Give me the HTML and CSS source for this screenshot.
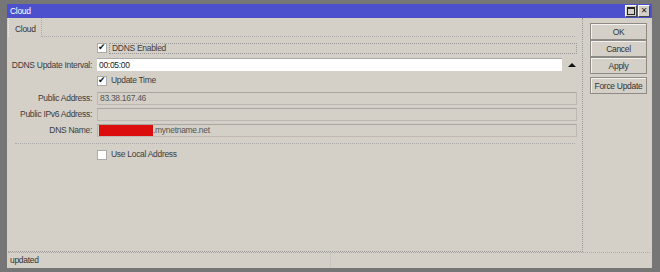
FILE: index.html
```html
<!DOCTYPE html>
<html lang="en">
<head>
  <meta charset="UTF-8" />
  <title>Cloud</title>
  <link rel="stylesheet" href="styles.css">
</head>
<body>
  <div class="window">
    <div class="titlebar">
      <span class="title">Cloud</span>
      <span class="tb-btn"><span class="max-icon"></span></span>
      <span class="tb-btn close">&#x2715;</span>
    </div>

    <div class="main">
      <div class="panel">
        <div class="tabs">
          <div class="tab">Cloud</div>
          <div class="tab-rest"></div>
        </div>

        <div class="form">
          <!-- checkboxes and fields -->
          <div class="row r1">
            <span class="label"></span>
            <span class="check on"></span>
            <span class="check-label focus">DDNS Enabled</span>
          </div>
          <div class="row r2">
            <span class="label">DDNS Update Interval:</span>
            <span class="input">00:05:00</span>
            <span class="arrow"></span>
          </div>
          <div class="row r3">
            <span class="label"></span>
            <span class="check on"></span>
            <span class="check-label">Update Time</span>
          </div>
          <div class="row r4">
            <span class="label">Public Address:</span>
            <span class="field">83.38.167.46</span>
          </div>
          <div class="row r5">
            <span class="label">Public IPv6 Address:</span>
            <span class="field"></span>
          </div>
          <div class="row r6">
            <span class="label">DNS Name:</span>
            <span class="field"><span class="redact"></span>.mynetname.net</span>
          </div>
          <div class="separator"></div>
          <div class="row r7">
            <span class="label"></span>
            <span class="check"></span>
            <span class="check-label">Use Local Address</span>
          </div>
        </div>
      </div>

      <div class="buttons">
        <button class="btn">OK</button>
        <button class="btn">Cancel</button>
        <button class="btn">Apply</button>
        <button class="btn spaced">Force Update</button>
      </div>
    </div>

    <div class="statusbar">
      <div class="status-cell first">updated</div>
      <div class="status-cell"></div>
    </div>
  </div>
</body>
</html>
```

FILE: styles.css
```css
body {
  margin: 0;
  background: #767676;
  font-family: "Liberation Sans", Arial, sans-serif;
  font-size: 8.5px;
  letter-spacing: -0.3px;
  color: #3c3c3c;
}
.window {
  margin: 4px 0 0 7px;
  width: 645px;
  height: 264px;
  background: #d4d0c8;
  display: flex;
  flex-direction: column;
}
.titlebar {
  height: 14px;
  background: #4d50cc;
  display: flex;
  align-items: center;
  padding: 0 2px 0 3px;
}
.title {
  color: #fff;
  flex: 1;
}
.tb-btn {
  width: 10px;
  height: 10px;
  background: #d4d0c8;
  border: 1px solid #fff;
  border-right-color: #444;
  border-bottom-color: #444;
  margin-left: 1px;
  display: flex;
  align-items: center;
  justify-content: center;
  color: #222;
  font-family: "DejaVu Sans", sans-serif;
  font-size: 8px;
  letter-spacing: 0;
  line-height: 1;
}
.max-icon {
  width: 6px;
  height: 5px;
  border: 1px solid #222;
  border-top-width: 2px;
}
.main {
  flex: 1;
  display: flex;
}
.panel {
  margin-left: 1px;
  width: 574px;
  border-right: 1px dotted #999;
  border-bottom: 1px dotted #999;
  display: flex;
  flex-direction: column;
}
.tabs {
  display: flex;
  height: 19px;
}
.tab {
  width: 26px;
  padding: 6px 0 0 6px;
  border-right: 1px dotted #aaa;
  border-left: 1px dotted #eee;
  color: #333;
}
.tab-rest {
  flex: 1;
  border-bottom: 1px dotted #aaa;
  margin-right: 7px;
}
.form {
  padding-top: 6px;
}
.row {
  display: flex;
  align-items: center;
}
.label {
  width: 84px;
  margin-right: 5px;
  text-align: right;
  white-space: nowrap;
  flex: none;
}
.r1 { height: 10px; }
.r2 { height: 13px; margin-top: 5px; }
.r3 { height: 11px; margin-top: 4px; }
.r4 { height: 12px; margin-top: 6px; }
.r5 { height: 12px; margin-top: 4px; }
.r6 { height: 12px; margin-top: 4px; }
.r7 { height: 11px; margin-top: 5px; }
.check {
  width: 8px;
  height: 8px;
  background: #fff;
  border: 1px solid #aaa;
  flex: none;
  position: relative;
}
.check.on::after {
  content: "\2714";
  position: absolute;
  left: 0;
  top: -2px;
  font-family: "DejaVu Sans", sans-serif;
  font-size: 9px;
  color: #111;
}
.check-label {
  margin-left: 2px;
  padding: 0 2px;
  height: 9px;
  line-height: 9px;
}
.check-label.focus {
  flex: none;
  width: 462px;
  border: 1px dotted #999;
}
.input {
  width: 463px;
  height: 12px;
  line-height: 12px;
  background: #fff;
  border-top: 1px solid #aaa;
  padding-left: 2px;
  color: #222;
}
.arrow {
  width: 0;
  height: 0;
  margin-left: 6px;
  border-left: 4px solid transparent;
  border-right: 4px solid transparent;
  border-bottom: 4px solid #111;
}
.field {
  width: 476px;
  height: 11px;
  line-height: 11px;
  border: 1px solid #bdb9b2;
  border-top-color: #a9a6a0;
  padding-left: 2px;
  color: #555;
  display: flex;
  align-items: center;
}
.redact {
  width: 54px;
  height: 11px;
  background: #dc0d0d;
  margin-left: -1px;
}
.separator {
  margin: 7px 7px 0 7px;
  border-top: 1px dotted #aaa;
}
.buttons {
  display: flex;
  flex-direction: column;
  margin: 5px 0 0 7px;
}
.btn {
  width: 57px;
  height: 17px;
  padding: 0;
  font-family: inherit;
  font-size: 8.5px;
  letter-spacing: -0.3px;
  white-space: nowrap;
  color: #333;
  background: #d4d0c8;
  border: 1px solid #8e8b86;
  box-shadow: inset 1px 1px 0 #f4f2ee;
}
.btn.spaced {
  margin-top: 3px;
}
.statusbar {
  height: 14px;
  margin: 0 2px 1px 1px;
  border-top: 1px dotted #aaa;
  display: flex;
}
.status-cell {
  flex: 1;
  padding: 2px 2px 0;
  color: #333;
}
.status-cell.first {
  flex: none;
  width: 318px;
  border-right: 1px dotted #bbb;
}
```
